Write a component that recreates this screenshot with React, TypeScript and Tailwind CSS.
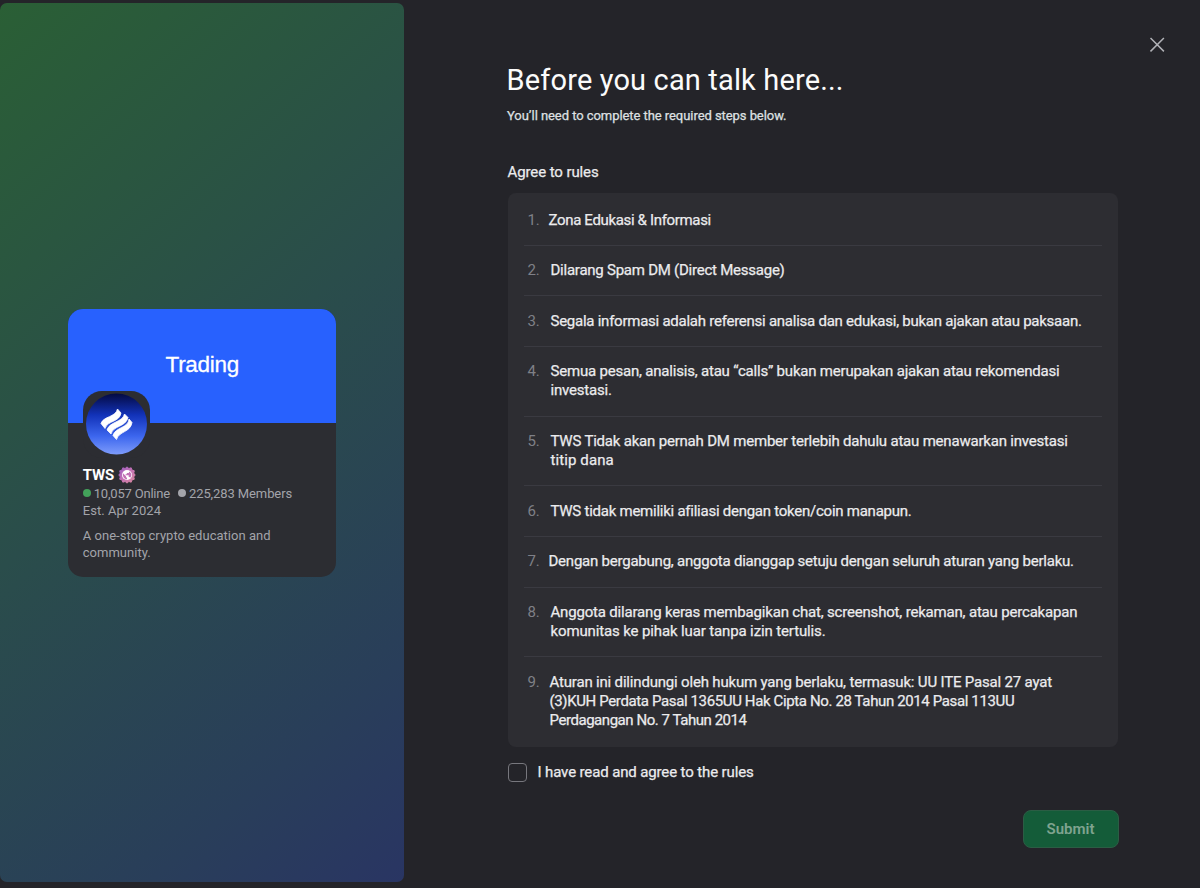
import * as React from "react";

interface Line {
  text: string;
  className: string;
}

interface Rule {
  offset: string;
  lines: Line[];
}

const RULES: Rule[] = [
  {
    offset: "w-[21px]",
    lines: [{ text: "Zona Edukasi & Informasi", className: "tracking-[-0.34px]" }],
  },
  {
    offset: "w-[23px]",
    lines: [
      { text: "Dilarang Spam DM (Direct Message)", className: "tracking-[-0.24px]" },
    ],
  },
  {
    offset: "w-[23px]",
    lines: [
      {
        text: "Segala informasi adalah referensi analisa dan edukasi, bukan ajakan atau paksaan.",
        className: "tracking-[-0.25px]",
      },
    ],
  },
  {
    offset: "w-[23px]",
    lines: [
      {
        text: "Semua pesan, analisis, atau “calls” bukan merupakan ajakan atau rekomendasi",
        className: "tracking-[-0.2px]",
      },
      { text: "investasi.", className: "tracking-[-0.2px]" },
    ],
  },
  {
    offset: "w-[23px]",
    lines: [
      {
        text: "TWS Tidak akan pernah DM member terlebih dahulu atau menawarkan investasi",
        className: "tracking-[-0.2px]",
      },
      { text: "titip dana", className: "tracking-[0.1px]" },
    ],
  },
  {
    offset: "w-[23px]",
    lines: [
      {
        text: "TWS tidak memiliki afiliasi dengan token/coin manapun.",
        className: "tracking-[-0.25px]",
      },
    ],
  },
  {
    offset: "w-[21px]",
    lines: [
      {
        text: "Dengan bergabung, anggota dianggap setuju dengan seluruh aturan yang berlaku.",
        className: "tracking-[-0.225px]",
      },
    ],
  },
  {
    offset: "w-[23px]",
    lines: [
      {
        text: "Anggota dilarang keras membagikan chat, screenshot, rekaman, atau percakapan",
        className: "tracking-[-0.185px]",
      },
      {
        text: "komunitas ke pihak luar tanpa izin tertulis.",
        className: "tracking-[-0.13px]",
      },
    ],
  },
  {
    offset: "w-[22px]",
    lines: [
      {
        text: "Aturan ini dilindungi oleh hukum yang berlaku, termasuk: UU ITE Pasal 27 ayat",
        className: "tracking-[-0.18px]",
      },
      {
        text: "(3)KUH Perdata Pasal 1365UU Hak Cipta No. 28 Tahun 2014 Pasal 113UU",
        className: "tracking-[-0.37px]",
      },
      { text: "Perdagangan No. 7 Tahun 2014", className: "tracking-[-0.45px]" },
    ],
  },
];

function ServerLogo() {
  return (
    <svg viewBox="0 0 62 62" className="size-[62px]">
      <defs>
        <linearGradient id="logo" x1="0" y1="0" x2="0" y2="1">
          <stop offset="0" stopColor="#040a42" />
          <stop offset="0.35" stopColor="#1232b8" />
          <stop offset="0.7" stopColor="#3c66ee" />
          <stop offset="1" stopColor="#7e9cfb" />
        </linearGradient>
      </defs>
      <circle cx="30.5" cy="31" r="30.5" fill="url(#logo)" />
      <g fill="#fff" stroke="#fff" strokeWidth="0.8" strokeLinejoin="round">
        <path d="M15 30.5C17.500 23 29.500 24.500 31.500 16L35 20C33.500 29.500 22 27 19 35.500Z" />
        <path d="M21 37C23.500 28.500 36.500 29.500 38.500 21L42 24.500C39.500 34.500 27.500 32 25 41Z" />
        <path d="M27 42.500C29.500 34 42.500 35 43 26L46 29.500C44.500 39.500 33 38 30.500 46.500Z" />
      </g>
    </svg>
  );
}

function VerifiedBadge() {
  return (
    <svg viewBox="0 0 18 18" className="size-[18px] relative top-[0.500px]">
      <defs>
        <linearGradient id="badge" x1="0" y1="0" x2="1" y2="1">
          <stop offset="0" stopColor="#9a5cc4" />
          <stop offset="0.5" stopColor="#c774b5" />
          <stop offset="1" stopColor="#d98a9c" />
        </linearGradient>
      </defs>
      <path
        fill="url(#badge)"
        stroke="url(#badge)"
        strokeWidth="1"
        strokeLinejoin="round"
        d="M9 .9 10.900 2.500 13.200 1.800 14 4.100 16.300 4.800 15.700 7.100 17.200 9 15.700 10.900 16.300 13.200 14 13.900 13.200 16.200 10.900 15.500 9 17.100 7.100 15.500 4.800 16.200 4 13.900 1.700 13.200 2.300 10.900.8 9 2.300 7.100 1.700 4.800 4 4.100 4.800 1.800 7.100 2.500Z"
      />
      <circle cx="9" cy="9" r="5" fill="#fff" />
      <path
        fill="#c372b6"
        d="M5 7.200 8 10.200v.8l1 1v1.200C6.200 13.200 4.300 10.500 5 7.200ZM12.300 11.700c-.2-.5-.6-.8-1.100-.8h-.5V9.300H7.600V8.200h1.200V7h1.300c.6 0 1-.4 1-1v-.4c2.500 1.200 3 4.200 1.200 6.100Z"
      />
    </svg>
  );
}

function ServerCard() {
  return (
    <div className="w-[268px] h-[268px] rounded-[15px] overflow-hidden bg-[#2c2d32] flex flex-col">
      <div className="h-[114.500px] shrink-0 bg-[#2861fe] flex items-center justify-center">
        <p className="font-['Liberation_Sans'] pl-[1px] pb-[1px] text-[22.500px] leading-none text-white tracking-[-0.3px] [-webkit-text-stroke:0.3px_white]">
          Trading
        </p>
      </div>
      <div className="px-[15px] flex flex-col items-start text-[13px] leading-[17.300px] text-[#a3a4aa]">
        <div className="relative -mt-[32.500px] -mb-[1px] size-[67.500px] rounded-[19px] bg-[#2c2d32] flex items-center justify-center">
          <ServerLogo />
        </div>
        <div className="mt-[7.500px] h-[19px] flex items-center gap-[4px]">
          <h2 className="pt-[3px] text-[15px] font-bold text-white tracking-[-0.2px]">TWS</h2>
          <VerifiedBadge />
        </div>
        <div className="mt-[1px] flex items-center whitespace-nowrap">
          <span className="size-[8px] rounded-full bg-[#43a25a] mr-[3px]" />
          <span className="tracking-[-0.2px]">10,057 Online</span>
          <span className="size-[8px] rounded-full bg-[#a3a4aa] ml-[8px] mr-[3px]" />
          <span className="tracking-[-0.1px]">225,283 Members</span>
        </div>
        <p className="tracking-[0.05px]">Est. Apr 2024</p>
        <p className="mt-[8px] tracking-[0.02px] whitespace-nowrap">
          A one-stop crypto education and
          <br />
          community.
        </p>
      </div>
    </div>
  );
}

function RuleRow({ rule, index }: { rule: Rule; index: number }) {
  return (
    <li className="flex pt-[15.500px] pb-[14.900px] pl-[4px] border-b border-[#3a3a41] last:border-b-0">
      <span className={`${rule.offset} shrink-0 text-[#7f8087] tracking-[-0.3px]`}>
        {index + 1}.
      </span>
      <p className="[-webkit-text-stroke:0.25px_currentColor]">
        {rule.lines.map((line) => (
          <span key={line.text} className={`block w-fit whitespace-nowrap ${line.className}`}>
            {line.text}
          </span>
        ))}
      </p>
    </li>
  );
}

export default function App() {
  const [agreed, setAgreed] = React.useState(false);

  return (
    <div className="w-[1200px] h-[888px] overflow-hidden bg-[#242429] flex font-[Roboto,sans-serif]">
      <aside className="w-[403.500px] h-[879px] mt-[3px] shrink-0 rounded-[7px] bg-[linear-gradient(139deg,#2a5f35_0%,#2a4d4b_46%,#293e5a_82%,#293563_100%)] flex items-center justify-center">
        <ServerCard />
      </aside>

      <main className="w-[611px] ml-[104px] pt-[62px] flex flex-col text-[#ebebed]">
        <h1 className="-ml-[1px] w-fit whitespace-nowrap text-[29px] leading-[37px] font-normal text-[#fbfbfb] tracking-[0.15px]">
          Before you can talk here...
        </h1>
        <p className="mt-[8px] -ml-[0.500px] w-fit text-[13px] leading-[17px] text-[#dfe0e2] tracking-[-0.06px] [-webkit-text-stroke:0.25px_currentColor]">
          You’ll need to complete the required steps below.
        </p>
        <h2 className="mt-[39px] w-fit text-[15px] leading-[19px] tracking-[-0.1px] [-webkit-text-stroke:0.25px_currentColor]">
          Agree to rules
        </h2>

        <ol className="mt-[11px] w-[610px] h-[554px] rounded-[8px] bg-[#2d2d32] px-[16px] pt-[2px] text-[15px] leading-[19.200px]">
          {RULES.map((rule, index) => (
            <RuleRow key={index} rule={rule} index={index} />
          ))}
        </ol>

        <label className="mt-[15px] flex items-center gap-[11px] text-[15px] leading-[20px]">
          <input
            type="checkbox"
            checked={agreed}
            onChange={() => setAgreed(!agreed)}
            className="appearance-none size-[19px] rounded-[4px] border border-[#77777d] checked:bg-[#5865f2]"
          />
          <span className="tracking-[-0.13px] [-webkit-text-stroke:0.25px_currentColor]">
            I have read and agree to the rules
          </span>
        </label>

        <button
          disabled={!agreed}
          className="self-end mt-[28px] w-[96px] h-[38px] rounded-[8px] bg-[#145c39] border border-[#2b5d44] text-[15px] leading-none font-semibold text-[#7fa38f]"
        >
          Submit
        </button>
      </main>

      <button aria-label="Close" className="ml-[31px] mt-[37px] size-[15px]">
        <svg viewBox="0 0 15 15" className="size-[15px] fill-none stroke-[#b0b1b6] stroke-[1.500px]">
          <path d="M.5 1 13.900 14.400M13.900 1 .5 14.400" />
        </svg>
      </button>
    </div>
  );
}
